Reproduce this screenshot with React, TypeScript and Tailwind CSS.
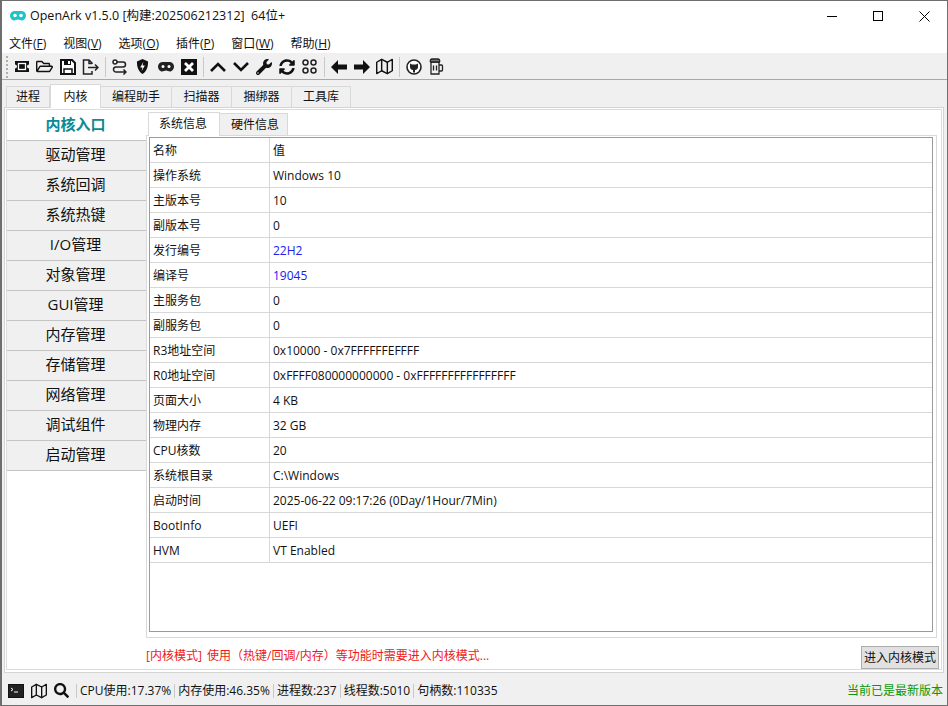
import type { ReactNode } from 'react'
import { FaRegFolderOpen, FaSearch, FaSyncAlt, FaWrench } from 'react-icons/fa'
import { FiMap } from 'react-icons/fi'

const font = { fontFamily: '"Open Sans", "Noto Sans CJK SC", sans-serif' }

const menus = [
  ['文件', 'F'],
  ['视图', 'V'],
  ['选项', 'O'],
  ['插件', 'P'],
  ['窗口', 'W'],
  ['帮助', 'H'],
]

const sideItems = ['驱动管理', '系统回调', '系统热键', 'I/O管理', '对象管理', 'GUI管理', '内存管理', '存储管理', '网络管理', '调试组件', '启动管理']

const mainTabs = [
  { label: '进程', width: 'w-[44px]' },
  { label: '内核', width: 'w-[51px]', active: true },
  { label: '编程助手', width: 'w-[71px]' },
  { label: '扫描器', width: 'w-[60px]' },
  { label: '捆绑器', width: 'w-[60px]' },
  { label: '工具库', width: 'w-[59px]' },
]

const rows: [string, string, boolean?][] = [
  ['名称', '值'],
  ['操作系统', 'Windows 10'],
  ['主版本号', '10'],
  ['副版本号', '0'],
  ['发行编号', '22H2', true],
  ['编译号', '19045', true],
  ['主服务包', '0'],
  ['副服务包', '0'],
  ['R3地址空间', '0x10000 - 0x7FFFFFFEFFFF'],
  ['R0地址空间', '0xFFFF080000000000 - 0xFFFFFFFFFFFFFFFF'],
  ['页面大小', '4 KB'],
  ['物理内存', '32 GB'],
  ['CPU核数', '20'],
  ['系统根目录', 'C:\\Windows'],
  ['启动时间', '2025-06-22 09:17:26 (0Day/1Hour/7Min)'],
  ['BootInfo', 'UEFI'],
  ['HVM', 'VT Enabled'],
]

function Tool({ children }: { children: ReactNode }) {
  return <div className="flex h-[24px] w-[23px] items-center justify-center text-[#111]">{children}</div>
}

function Sep() {
  return <div className="ml-[3px] mr-[2px] h-[20px] w-px bg-[#c8c8c8]" />
}

function Logo() {
  return (
    <svg width="16" height="12" viewBox="0 0 16 12">
      <path d="M5 1h6c3 0 5 2 5 4.500S14 10.500 12 10.500c-1.600 0-2.600-1-4-1s-2.400 1-4 1C2 10.500 0 8 0 5.500S2 1 5 1z" fill="#1fc4c8" />
      <circle cx="5" cy="5.500" r="1.800" fill="#fff" />
      <circle cx="11" cy="5.500" r="1.800" fill="#fff" />
    </svg>
  )
}

function Toolbar() {
  return (
    <div className="flex h-[27px] shrink-0 items-center border-b border-[#a8a8a8] bg-[#f0f0f0] pl-[4px] pt-px">
      <div className="h-[22px] w-[4px] border-l-2 border-dotted border-[#b0b0b0]" />
      <Tool>
        <svg width="16" height="13" viewBox="0 0 16 13"><path d="M1 1h14v3.500a2 2 0 0 0 0 4V12H1V8.500a2 2 0 0 0 0-4z" fill="#111" /><rect x="4.500" y="3.500" width="7" height="6" fill="none" stroke="#fff" strokeWidth="1.300" /></svg>
      </Tool>
      <Tool><FaRegFolderOpen size={17} /></Tool>
      <Tool>
        <svg width="16" height="16" viewBox="0 0 16 16"><path d="M1 1h11l3 3v11H1z" fill="#fff" stroke="#111" strokeWidth="2" /><path d="M4 1h7v5H4z" fill="#111" /><rect x="8" y="2" width="2" height="3" fill="#fff" /><path d="M4 15v-5h8v5" fill="none" stroke="#111" strokeWidth="1.500" /></svg>
      </Tool>
      <Tool>
        <svg width="17" height="16" viewBox="0 0 17 16" fill="none" stroke="#222" strokeWidth="1.500"><path d="M10 5V4L7 1H1.500v14H10v-3M7 1v3.500h3M6 8.500h10M13 5.500l3 3-3 3" /></svg>
      </Tool>
      <Sep />
      <Tool>
        <svg width="15" height="16" viewBox="0 0 15 16" fill="none" stroke="#222" strokeWidth="1.500"><circle cx="3" cy="3" r="2" /><path d="M5 3h6a2.500 2.500 0 0 1 0 5H4a2.500 2.500 0 0 0 0 5h10M11.500 10.500l2.500 2.500-2.500 2.500" /></svg>
      </Tool>
      <Tool>
        <svg width="13" height="15" viewBox="0 0 14 16"><path d="M7 0l6 2.500c0 6-1.500 10.500-6 13.500C2.500 13 1 8.500 1 2.500z" fill="#111" /><path d="M8 3L4.500 9H7l-1 4 3.500-6H7z" fill="#fff" /></svg>
      </Tool>
      <Tool>
        <svg width="16" height="12" viewBox="0 0 16 12"><path d="M5 1h6c3 0 5 2 5 4.500S14 10.500 12 10.500c-1.600 0-2.600-1-4-1s-2.400 1-4 1C2 10.500 0 8 0 5.500S2 1 5 1z" fill="#222" /><circle cx="5" cy="5.500" r="1.500" fill="#fff" /><circle cx="11" cy="5.500" r="1.500" fill="#fff" /></svg>
      </Tool>
      <Tool>
        <svg width="16" height="16" viewBox="0 0 16 16"><rect width="16" height="16" fill="#111" /><path d="M4 4l8 8M12 4l-8 8" stroke="#fff" strokeWidth="2.800" /></svg>
      </Tool>
      <Sep />
      <Tool>
        <svg width="16" height="10" viewBox="0 0 16 10" fill="none" stroke="#111" strokeWidth="2.600"><path d="M1 9l7-7 7 7" /></svg>
      </Tool>
      <Tool>
        <svg width="16" height="10" viewBox="0 0 16 10" fill="none" stroke="#111" strokeWidth="2.600"><path d="M1 1l7 7 7-7" /></svg>
      </Tool>
      <Tool><FaWrench size={16} /></Tool>
      <Tool><FaSyncAlt size={16} /></Tool>
      <Tool>
        <svg width="15" height="15" viewBox="0 0 15 15" fill="none" stroke="#222" strokeWidth="1.500"><circle cx="3.500" cy="3.500" r="2.500" /><circle cx="11.500" cy="3.500" r="2.500" /><circle cx="3.500" cy="11.500" r="2.500" /><circle cx="11.500" cy="11.500" r="2.500" /></svg>
      </Tool>
      <Sep />
      <Tool>
        <svg width="16" height="14" viewBox="0 0 16 14"><path d="M0 7l7-7v4.500h9v5H7V14z" fill="#111" /></svg>
      </Tool>
      <Tool>
        <svg width="16" height="14" viewBox="0 0 16 14"><path d="M16 7L9 0v4.500H0v5h9V14z" fill="#111" /></svg>
      </Tool>
      <Tool><FiMap size={17} /></Tool>
      <Sep />
      <Tool>
        <svg width="16" height="16" viewBox="0 0 16 16"><circle cx="8" cy="8" r="7" fill="#fff" stroke="#222" strokeWidth="1.600" /><path d="M4 4.500l2 1h4l2-1v3.500c0 2-1.500 3-3 3v2.500H7V11c-1.500 0-3-1-3-3z" fill="#222" /></svg>
      </Tool>
      <Tool>
        <svg width="15" height="17" viewBox="0 0 15 17" fill="none" stroke="#222" strokeWidth="1.300"><path d="M2 4h8v12H2zM10 7h2.500a1 1 0 0 1 1 1v4a1 1 0 0 1-1 1H10M4.500 7.500v5M7.500 7.500v5" /><path d="M1.500 4a2 2 0 0 1 2-3h5a2 2 0 0 1 2 3z" fill="#777" /></svg>
      </Tool>
    </div>
  )
}

export default function App() {
  return (
    <div className="flex h-[706px] w-[948px] flex-col overflow-hidden border border-l-2 border-[#6e6e6e] bg-[#f0f0f0] text-[12px] text-[#111]" style={font}>
      <div className="flex h-[30px] shrink-0 items-center bg-white">
        <div className="ml-[8px] mr-[4px]"><Logo /></div>
        <span className="text-[12.500px]">OpenArk v1.5.0 [构建:202506212312]&nbsp;&nbsp;64位+</span>
        <div className="ml-auto flex items-center">
          <div className="flex w-[46px] justify-center"><div className="h-px w-[10px] bg-black" /></div>
          <div className="flex w-[46px] justify-center"><div className="h-[10px] w-[10px] border border-black" /></div>
          <div className="flex w-[46px] justify-center">
            <svg width="11" height="11" viewBox="0 0 11 11" stroke="#000" fill="none"><path d="M.5.500l10 10M10.500.500l-10 10" /></svg>
          </div>
        </div>
      </div>

      <div className="flex h-[22px] shrink-0 items-center gap-[17px] bg-white pl-[7px] pt-[3px]">
        {menus.map(([name, key]) => (
          <span key={key}>{name}(<span className="underline">{key}</span>)</span>
        ))}
      </div>

      <Toolbar />

      <div className="flex h-[27px] shrink-0 items-end pl-[4px]">
        {mainTabs.map((tab) => (
          <div
            key={tab.label}
            className={
              tab.active
                ? `${tab.width} z-10 -mb-px flex h-[24px] items-center justify-center border border-b-0 border-[#d9d9d9] bg-white`
                : `${tab.width} flex h-[21px] items-center justify-center border border-b-0 border-l-0 border-[#d9d9d9] first:border-l`
            }
          >
            {tab.label}
          </div>
        ))}
      </div>

      <div className="ml-[2px] mr-[3px] h-[566px] shrink-0 border border-[#d4d4d4] bg-white px-[1px] pb-[2px] pt-[1px]">
        <div className="flex h-full border border-[#dcdcdc]">
          <div className="flex w-[139px] shrink-0 flex-col">
            <div className="flex h-[30px] items-center justify-center pb-[2px] pr-[2px] text-[15px] font-bold text-[#0b8a8f]">内核入口</div>
            {sideItems.map((item) => (
              <div key={item} className="flex h-[30px] items-center justify-center border-t border-[#c4c4c4] bg-[#f0f0f0] pb-[2px] pr-[2px] text-[15px]">
                {item}
              </div>
            ))}
            <div className="border-t border-[#c4c4c4]" />
          </div>

          <div className="flex min-w-0 flex-1 flex-col pr-px">
            <div className="flex h-[25px] shrink-0 items-end pl-[2px]">
              <div className="z-10 -mb-px flex h-[24px] w-[72px] items-center justify-center border border-b-0 border-[#d9d9d9] bg-white pb-[2px] pr-[2px]">系统信息</div>
              <div className="flex h-[22px] w-[68px] items-center justify-center border border-b-0 border-l-0 border-[#d9d9d9] bg-[#f0f0f0] pl-[3px]">硬件信息</div>
            </div>
            <div className="mr-[3px] h-[503px] shrink-0 border border-[#d9d9d9] pb-[5px] pl-[2px] pr-[3px] pt-px">
              <div className="h-full border border-[#9a9a9f]">
                {rows.map(([name, value, blue]) => (
                  <div key={name} className="flex h-[25px] border-b border-[#d8d8d8]">
                    <div className="flex w-[120px] items-center border-r border-[#d8d8d8] pl-[3px] pt-[2px]">{name}</div>
                    <div className={blue ? 'flex items-center pl-[3px] pt-[2px] text-[#2020ee]' : 'flex items-center pl-[3px] pt-[2px]'}>{value}</div>
                  </div>
                ))}
              </div>
            </div>
            <div className="flex flex-1 items-end justify-between">
              <span className="mb-[4px] text-[#f01818]"><span className="mr-[2px]">[内核模式]</span> 使用（热键/回调/内存）等功能时需要进入内核模式...</span>
              <div className="mr-px flex h-[23px] w-[78px] items-center justify-center border border-[#adadad] bg-[#e1e1e1]">进入内核模式</div>
            </div>
          </div>
        </div>
      </div>

      <div className="flex flex-1 items-center pl-[6px] pr-[4px] pt-[3px]">
        <div className="flex h-[16px] items-center gap-[7px]">
          <svg width="16" height="14" viewBox="0 0 16 14"><rect x=".5" y=".5" width="15" height="13" fill="#222" stroke="#111" /><path d="M3 4l2 1.500L3 7M6 8h4" stroke="#fff" fill="none" /></svg>
          <FiMap size={16} />
          <FaSearch size={15} />
        </div>
        <div className="ml-[7px] flex items-center">
          {['CPU使用:17.37%', '内存使用:46.35%', '进程数:237', '线程数:5010', '句柄数:110335'].map((s) => (
            <span key={s} className="border-l border-[#c8c8c8] px-[3px] leading-[14px]">{s}</span>
          ))}
        </div>
        <span className="ml-auto text-[#0a960a]">当前已是最新版本</span>
      </div>
    </div>
  )
}
